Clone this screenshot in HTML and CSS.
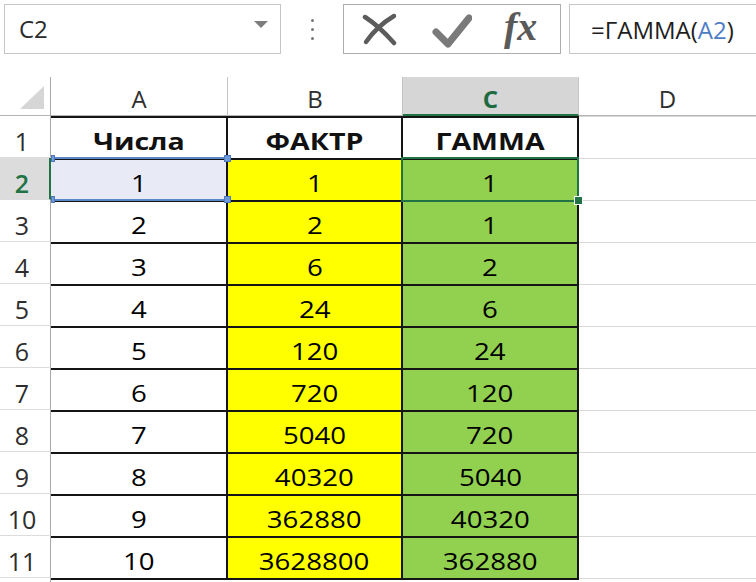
FILE: index.html
```html
<!DOCTYPE html>
<html lang="ru">
<head>
<meta charset="utf-8">
<title>ГАММА</title>
<link rel="stylesheet" href="styles.css">
</head>
<body>
<div class="app">
  <div class="fbar">
    <div class="namebox"><span class="ref">C2</span><span class="caret"></span></div>
    <div class="dots"><i></i><i></i><i></i></div>
    <div class="fxbtns">
      <svg class="ico-x" width="36" height="34" viewBox="0 0 36 34"><path d="M3 5 Q17 14 32 31" fill="none" stroke="#5c5c5c" stroke-width="4.5" stroke-linecap="round"/><path d="M32 4 Q15 14 4 30" fill="none" stroke="#5c5c5c" stroke-width="4.5" stroke-linecap="round"/></svg>
      <svg class="ico-ok" width="40" height="36" viewBox="0 0 40 36"><path d="M4 20 L16 32 L37 6" fill="none" stroke="#7a7a7a" stroke-width="7" stroke-linecap="round" stroke-linejoin="round"/></svg>
      <span class="fx">fx</span>
    </div>
    <div class="formula">=ГАММА(<span class="arg">A2</span>)</div>
  </div>

  <div class="sheet">
    <div class="corner"><span class="tri"></span></div>
    <div class="ch">A</div>
    <div class="ch">B</div>
    <div class="ch ch-sel">C</div>
    <div class="ch ch-last">D</div>

    <div class="rh">1</div>
    <div class="cell hdr"><span>Числа</span></div>
    <div class="cell hdr"><span>ФАКТР</span></div>
    <div class="cell hdr"><span>ГАММА</span></div>
    <div class="gc"></div>

    <div class="rh rh-sel">2</div>
    <div class="cell ref-a"><span>1</span><div class="refbox"><i class="h tl"></i><i class="h tr"></i><i class="h bl"></i><i class="h br"></i></div></div>
    <div class="cell yel"><span>1</span></div>
    <div class="cell grn act"><span>1</span><div class="actbox"></div><i class="fill"></i></div>
    <div class="gc"></div>

    <div class="rh">3</div>
    <div class="cell"><span>2</span></div>
    <div class="cell yel"><span>2</span></div>
    <div class="cell grn"><span>1</span></div>
    <div class="gc"></div>

    <div class="rh">4</div>
    <div class="cell"><span>3</span></div>
    <div class="cell yel"><span>6</span></div>
    <div class="cell grn"><span>2</span></div>
    <div class="gc"></div>

    <div class="rh">5</div>
    <div class="cell"><span>4</span></div>
    <div class="cell yel"><span>24</span></div>
    <div class="cell grn"><span>6</span></div>
    <div class="gc"></div>

    <div class="rh">6</div>
    <div class="cell"><span>5</span></div>
    <div class="cell yel"><span>120</span></div>
    <div class="cell grn"><span>24</span></div>
    <div class="gc"></div>

    <div class="rh">7</div>
    <div class="cell"><span>6</span></div>
    <div class="cell yel"><span>720</span></div>
    <div class="cell grn"><span>120</span></div>
    <div class="gc"></div>

    <div class="rh">8</div>
    <div class="cell"><span>7</span></div>
    <div class="cell yel"><span>5040</span></div>
    <div class="cell grn"><span>720</span></div>
    <div class="gc"></div>

    <div class="rh">9</div>
    <div class="cell"><span>8</span></div>
    <div class="cell yel"><span>40320</span></div>
    <div class="cell grn"><span>5040</span></div>
    <div class="gc"></div>

    <div class="rh">10</div>
    <div class="cell"><span>9</span></div>
    <div class="cell yel"><span>362880</span></div>
    <div class="cell grn"><span>40320</span></div>
    <div class="gc"></div>

    <div class="rh">11</div>
    <div class="cell"><span>10</span></div>
    <div class="cell yel"><span>3628800</span></div>
    <div class="cell grn"><span>362880</span></div>
    <div class="gc"></div>

    <div class="rh rh-end"></div>
    <div class="edge"></div>
    <div class="edge"></div>
    <div class="edge"></div>
    <div class="gc"></div>
  </div>
</div>
</body>
</html>
```

FILE: styles.css
```css
html, body {
  margin: 0;
  padding: 0;
  background: #ffffff;
}
body {
  width: 756px;
  height: 582px;
  overflow: hidden;
  font-family: "Open Sans", "Noto Sans", "DejaVu Sans", sans-serif;
  color: #222;
}
.app {
  width: 756px;
  height: 582px;
  overflow: hidden;
}

/* formula bar */
.fbar {
  height: 77px;
  display: flex;
  align-items: flex-start;
  padding: 4px 0 0 4px;
  box-sizing: border-box;
}
.namebox {
  width: 277px;
  height: 50px;
  box-sizing: border-box;
  border: 1px solid #c6c6c6;
  display: flex;
  align-items: center;
  justify-content: space-between;
  padding: 0 12px 0 14px;
  background: #fff;
}
.ref {
  font-size: 24px;
  color: #2a2a2a;
  padding-bottom: 1px;
}
.caret {
  width: 0;
  height: 0;
  border-left: 7px solid transparent;
  border-right: 7px solid transparent;
  border-top: 7px solid #7d7d7d;
  margin-bottom: 10px;
}
.dots {
  width: 62px;
  height: 50px;
  display: flex;
  flex-direction: column;
  align-items: center;
  justify-content: center;
  gap: 6px;
  padding-left: 1px;
  box-sizing: border-box;
}
.dots i {
  width: 3px;
  height: 3px;
  border-radius: 50%;
  background: #777;
  display: block;
}
.fxbtns {
  width: 218px;
  height: 50px;
  box-sizing: border-box;
  border: 1px solid #adadad;
  display: flex;
  align-items: center;
  background: #fff;
}
.ico-x {
  margin-left: 18px;
}
.ico-ok {
  margin-left: 34px;
  margin-top: 1px;
}
.fx {
  margin-left: 32px;
  font-family: "Liberation Serif", "DejaVu Serif", serif;
  font-style: italic;
  font-weight: 700;
  font-size: 40px;
  line-height: 1;
  color: #5a5a5a;
  margin-top: -4px;
}
.formula {
  flex: 1;
  height: 50px;
  margin-left: 8px;
  box-sizing: border-box;
  border: 1px solid #c6c6c6;
  border-right: none;
  display: flex;
  align-items: center;
  padding-left: 21px;
  font-size: 24px;
  color: #1e1e1e;
  white-space: nowrap;
}
.arg {
  color: #4f7cc6;
}

/* sheet */
.sheet {
  display: grid;
  grid-template-columns: 51px 177px 175px 176px 177px;
  grid-template-rows: 39px repeat(11, 42px) 4px;
}
.sheet > div {
  box-sizing: border-box;
}
.corner {
  border-right: 1px solid #a9a9a9;
  border-bottom: 1px solid #b4b4b4;
  position: relative;
}
.tri {
  position: absolute;
  left: 20px;
  top: 9px;
  width: 0;
  height: 0;
  border-left: 24px solid transparent;
  border-bottom: 23px solid #d6d6d6;
}
.ch {
  display: flex;
  align-items: center;
  justify-content: center;
  padding-top: 5px;
  font-size: 24px;
  color: #2e2e2e;
  border-right: 1px solid #c4c4c4;
  border-bottom: 1px solid #b4b4b4;
}
.ch-sel {
  background: #d6d6d6;
  color: #1e6b41;
  font-weight: 700;
  border-bottom: 2px solid #217346;
  border-right: 1px solid #c8c8c8;
}
.ch-last {
  border-right: none;
}
.rh {
  display: flex;
  align-items: center;
  justify-content: center;
  padding: 9px 6px 0 0;
  font-size: 25px;
  color: #2e2e2e;
  border-right: 1px solid #a9a9a9;
  border-bottom: 1px solid #dcdcdc;
}
.rh-end {
  border-bottom: none;
}
.rh-sel {
  background: #dcdcdc;
  color: #217346;
  font-weight: 600;
  border-right: 2px solid #217346;
  padding-right: 5px;
}
.cell {
  position: relative;
  display: flex;
  align-items: center;
  justify-content: center;
  padding-top: 6px;
  font-size: 24px;
  color: #000;
  background: #fff;
  border-top: 2px solid #151515;
  border-right: 2px solid #151515;
  white-space: nowrap;
}
.cell > span {
  display: inline-block;
  line-height: 1;
  transform: scaleX(1.15);
}
.hdr {
  font-weight: 700;
  font-size: 23px;
  color: #111;
}
.hdr > span {
  transform: scaleX(1.24);
}
.yel {
  background: #ffff00;
}
.grn {
  background: #92d050;
}
.edge {
  border-top: 2px solid #151515;
}
.gc {
  border-top: 1px solid #d8d8d8;
}

/* reference highlight on A2 */
.ref-a {
  background: #e8ebf5;
}
.refbox {
  position: absolute;
  left: 0;
  right: -2px;
  top: -3px;
  bottom: -1px;
  border-top: 2px solid #5a86cb;
  border-bottom: 2px solid #5a86cb;
  z-index: 2;
}
.refbox .h {
  position: absolute;
  width: 7px;
  height: 7px;
  background: #6f98d8;
  border: 1px solid #4f79bd;
  box-sizing: border-box;
}
.refbox .tl { left: 0; top: -4px; width: 4px; }
.refbox .bl { left: 0; bottom: -4px; width: 4px; }
.refbox .tr { right: -3px; top: -4px; }
.refbox .br { right: -3px; bottom: -4px; }

/* active cell C2 */
.actbox {
  position: absolute;
  left: -2px;
  right: -2px;
  top: -3px;
  bottom: -2px;
  border: 2px solid #217346;
  z-index: 3;
}
.fill {
  position: absolute;
  right: -6px;
  bottom: -5px;
  width: 9px;
  height: 9px;
  background: #217346;
  border: 1px solid #fff;
  box-sizing: border-box;
  z-index: 4;
}
```
